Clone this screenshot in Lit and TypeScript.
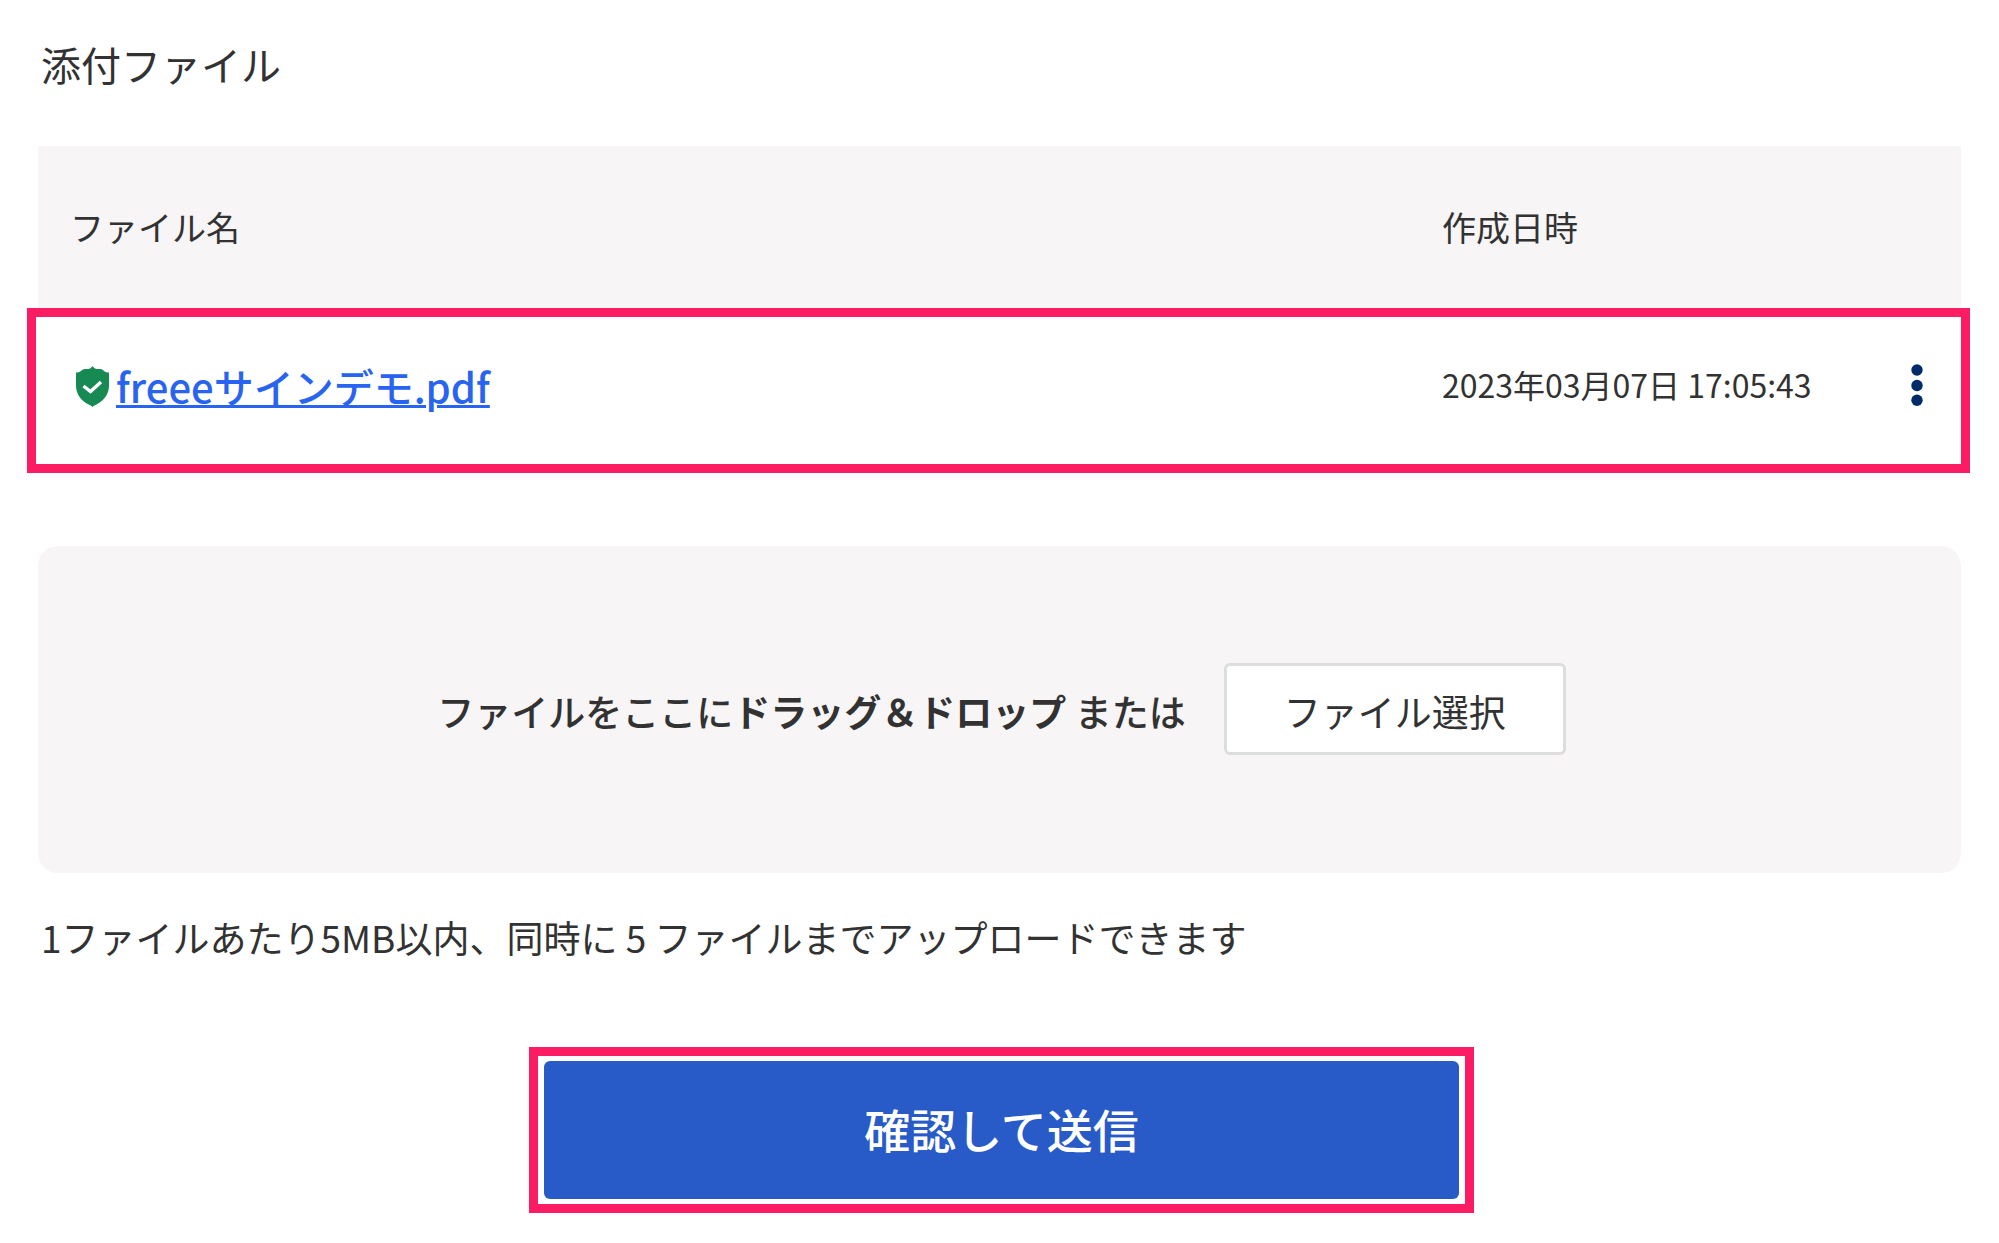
import { LitElement, html, css } from "lit";
import { customElement, property, state } from "lit/decorators.js";

interface AttachedFile {
  name: string;
  createdAt: string;
}

@customElement("file-table")
export class FileTable extends LitElement {
  @property({ attribute: false }) files: AttachedFile[] = [];

  static styles = css`
    :host {
      display: block;
    }
    .table {
      width: 100%;
      table-layout: fixed;
      border-collapse: collapse;
      color: #323232;
    }
    .col-date {
      width: 400px;
    }
    .col-menu {
      width: 119px;
    }
    .head {
      height: 162px;
      padding: 0 0 0 32px;
      background: #f7f5f6;
      font-size: 34px;
      line-height: 48px;
      font-weight: 400;
      text-align: left;
    }
    .head-date,
    .date {
      padding-left: 0;
    }
    .row {
      position: relative;
    }
    .cell {
      height: 152px;
      padding: 0;
      font-size: 32px;
      line-height: 48px;
      white-space: nowrap;
    }
    .name {
      display: flex;
      align-items: center;
      gap: 7px;
      padding: 4px 0 0 38px;
    }
    .shield {
      flex: none;
      width: 33px;
      height: 41px;
    }
    .link {
      color: #2864f0;
      font-size: 40px;
      line-height: 56px;
      font-weight: 500;
      text-decoration: underline;
      text-decoration-thickness: 3px;
    }
    .more {
      display: flex;
      justify-content: center;
      width: 44px;
      padding: 0;
      margin-left: 53px;
      border: 0;
      background: none;
      cursor: pointer;
    }
    .dots {
      width: 12px;
      height: 43px;
    }
    .marker {
      position: absolute;
      inset: 0 -9px -13px -11px;
      border: 9px solid #fc1c64;
      pointer-events: none;
    }
  `;

  render() {
    return html`
      <table class="table">
        <colgroup>
          <col />
          <col class="col-date" />
          <col class="col-menu" />
        </colgroup>
        <thead>
          <tr>
            <th class="head" scope="col">ファイル名</th>
            <th class="head head-date" scope="col">作成日時</th>
            <td class="head"></td>
          </tr>
        </thead>
        <tbody>
          ${this.files.map(
            (file) => html`
              <tr class="row">
                <td class="cell">
                  <div class="name">
                    <svg class="shield" viewBox="0 0 33 41" aria-hidden="true">
                      <path
                        d="M16.500 0C18 2.500 20 3 22 3C25 3 26.500 3.300 28 5C29.500 6.500 31 6.500 33 6.500V20C33 29 26 36 20.500 38.500C18.500 39.300 17.500 40 16.500 41C15.500 40 14.500 39.300 12.500 38.500C7 36 0 29 0 20V6.500C2 6.500 3.500 6.500 5 5C6.500 3.300 8 3 11 3C13 3 15 2.500 16.500 0Z"
                        fill="#178a54"
                      />
                      <path
                        d="M7.500 20L14.500 25.500L25 16"
                        fill="none"
                        stroke="#fff"
                        stroke-width="3.400"
                      />
                    </svg>
                    <a class="link" href="#">${file.name}</a>
                  </div>
                </td>
                <td class="cell date">${file.createdAt}</td>
                <td class="cell">
                  <button class="more" type="button" aria-label="メニュー">
                    <svg class="dots" viewBox="0 0 12 43" fill="#002b68" aria-hidden="true">
                      <circle cx="6" cy="7" r="5.700" />
                      <circle cx="6" cy="22.500" r="5.700" />
                      <circle cx="6" cy="37.300" r="5.700" />
                    </svg>
                  </button>
                  <div class="marker"></div>
                </td>
              </tr>
            `
          )}
        </tbody>
      </table>
    `;
  }
}

@customElement("drop-zone")
export class DropZone extends LitElement {
  static styles = css`
    :host {
      display: block;
    }
    .zone {
      display: flex;
      align-items: center;
      justify-content: center;
      gap: 38px;
      padding: 117px 24px 118px 28px;
      border-radius: 20px;
      background: #f7f5f6;
      color: #323232;
    }
    .message {
      margin: 0;
      padding-top: 4px;
      font-size: 37px;
      line-height: 56px;
      font-weight: 500;
    }
    .strong {
      font-weight: 700;
    }
    .select {
      box-sizing: border-box;
      padding: 17px 57px 13px;
      border: 3px solid #dcdddd;
      border-radius: 6px;
      background: #fff;
      color: #323232;
      font-family: inherit;
      font-size: 37px;
      line-height: 56px;
      white-space: nowrap;
      cursor: pointer;
    }
  `;

  render() {
    return html`
      <div class="zone">
        <p class="message">
          ファイルをここに<strong class="strong">ドラッグ＆ドロップ</strong> または
        </p>
        <button class="select" type="button">ファイル選択</button>
      </div>
    `;
  }
}

@customElement("app-root")
export class AppRoot extends LitElement {
  @state() private files: AttachedFile[] = [
    { name: "freeeサインデモ.pdf", createdAt: "2023年03月07日 17:05:43" },
  ];

  static styles = css`
    :host {
      display: block;
      background: #fff;
      color: #323232;
      font-family: "Noto Sans CJK JP", sans-serif;
    }
    .page {
      display: flex;
      flex-direction: column;
      padding: 34px 38px 30px;
    }
    .title {
      margin: 0 0 52px 3px;
      font-size: 40px;
      line-height: 60px;
      font-weight: 400;
    }
    .drop {
      margin-top: 86px;
    }
    .hint {
      margin: 36px 0 0 3px;
      font-size: 37px;
      line-height: 56px;
    }
    .actions {
      display: flex;
      justify-content: center;
      margin-top: 82px;
      padding-left: 4px;
    }
    .frame {
      box-sizing: border-box;
      display: flex;
      width: 100%;
      max-width: 945px;
      padding: 5px 6px;
      border: 9px solid #fc1c64;
    }
    .submit {
      flex: 1;
      padding: 32px 24px 36px;
      border: 0;
      border-radius: 6px;
      background: #285ac8;
      color: #fff;
      font-family: inherit;
      font-size: 46px;
      line-height: 70px;
      font-weight: 500;
      cursor: pointer;
    }
  `;

  render() {
    return html`
      <main class="page">
        <h1 class="title">添付ファイル</h1>
        <file-table .files=${this.files}></file-table>
        <drop-zone class="drop"></drop-zone>
        <p class="hint">
          1ファイルあたり5MB以内、同時に 5 ファイルまでアップロードできます
        </p>
        <div class="actions">
          <div class="frame">
            <button class="submit" type="button">確認して送信</button>
          </div>
        </div>
      </main>
    `;
  }
}
